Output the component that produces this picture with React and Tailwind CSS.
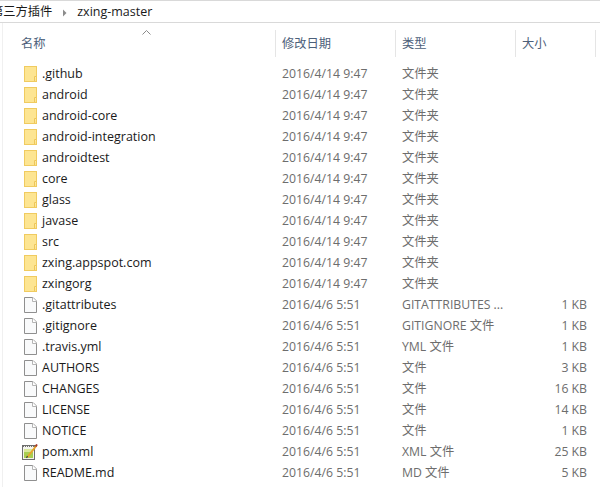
const rows = [
  ['.github', '2016/4/14 9:47', '文件夹', '', 'folder'],
  ['android', '2016/4/14 9:47', '文件夹', '', 'folder'],
  ['android-core', '2016/4/14 9:47', '文件夹', '', 'folder'],
  ['android-integration', '2016/4/14 9:47', '文件夹', '', 'folder'],
  ['androidtest', '2016/4/14 9:47', '文件夹', '', 'folder'],
  ['core', '2016/4/14 9:47', '文件夹', '', 'folder'],
  ['glass', '2016/4/14 9:47', '文件夹', '', 'folder'],
  ['javase', '2016/4/14 9:47', '文件夹', '', 'folder'],
  ['src', '2016/4/14 9:47', '文件夹', '', 'folder'],
  ['zxing.appspot.com', '2016/4/14 9:47', '文件夹', '', 'folder'],
  ['zxingorg', '2016/4/14 9:47', '文件夹', '', 'folder'],
  ['.gitattributes', '2016/4/6 5:51', 'GITATTRIBUTES ...', '1 KB', 'file'],
  ['.gitignore', '2016/4/6 5:51', 'GITIGNORE 文件', '1 KB', 'file'],
  ['.travis.yml', '2016/4/6 5:51', 'YML 文件', '1 KB', 'file'],
  ['AUTHORS', '2016/4/6 5:51', '文件', '3 KB', 'file'],
  ['CHANGES', '2016/4/6 5:51', '文件', '16 KB', 'file'],
  ['LICENSE', '2016/4/6 5:51', '文件', '14 KB', 'file'],
  ['NOTICE', '2016/4/6 5:51', '文件', '1 KB', 'file'],
  ['pom.xml', '2016/4/6 5:51', 'XML 文件', '25 KB', 'xml'],
  ['README.md', '2016/4/6 5:51', 'MD 文件', '5 KB', 'file'],
];

function FolderIcon() {
  return (
    <svg width="13" height="16" viewBox="0 0 13 16" className="shrink-0">
      <rect x="0.5" y="0.5" width="12" height="15" fill="#fde592" stroke="#f0cb60" />
      <path d="M10.5 15 V10.5 H12" fill="#fdeeb4" stroke="#eec65a" />
    </svg>
  );
}

function FileIcon() {
  return (
    <svg width="13" height="16" viewBox="0 0 13 16" className="shrink-0">
      <path d="M0.5 0.5 H9 L12.5 4 V15.5 H0.5 Z" fill="#f9fafb" stroke="#8f8f8f" />
      <path d="M8.5 0.5 V4.5 H12.5" fill="#ffffff" stroke="#b5b5b5" />
    </svg>
  );
}

function XmlIcon() {
  return (
    <svg width="16" height="16" viewBox="0 0 16 16" className="shrink-0 -ml-0.5 -mr-px">
      <rect x="0.5" y="1.5" width="12" height="14" fill="#f4f4ee" stroke="#6e6e6e" />
      <path d="M1 2.5 H12" stroke="#6e6e6e" strokeDasharray="1 1" />
      <rect x="2" y="5" width="9" height="9" fill="#a8cf52" />
      <rect x="2" y="5" width="9" height="3" fill="#d9e89a" />
      <path d="M5.5 13 L14.5 1.5" stroke="#e8a52c" strokeWidth="2" />
      <path d="M13.5 2.5 L15 0.5" stroke="#a33a2a" strokeWidth="2" />
      <path d="M4.5 14 L5.5 12" stroke="#444444" strokeWidth="1.2" />
    </svg>
  );
}

function Row({ name, date, type, size, kind }) {
  return (
    <div className="flex h-[21px] items-center">
      <div className="flex w-[275px] items-center gap-[3px] pl-[24px]">
        {kind === 'folder' && <FolderIcon />}
        {kind === 'file' && <FileIcon />}
        {kind === 'xml' && <XmlIcon />}
        <span className="pl-[2px] pt-[2px] text-[12.5px] text-[#1a1a1a]">{name}</span>
      </div>
      <div className="w-[120px] pl-[7px] pt-[2px] text-[#6d6d6d]">{date}</div>
      <div className="w-[120px] pl-[7px] pt-[2px] text-[#6d6d6d]">{type}</div>
      <div className="w-[72px] pt-[2px] text-right text-[#6d6d6d]">{size}</div>
    </div>
  );
}

function HeaderCell({ width, children }) {
  return (
    <div className="flex h-[27px] items-center border-r border-[#e5e5e5] pl-[6px] pt-[2px] text-[#4c607a]" style={{ width }}>
      {children}
    </div>
  );
}

export default function App() {
  return (
    <div className="h-[487px] w-[600px] overflow-hidden bg-white font-['Open_Sans','Noto_Sans_CJK_SC',sans-serif] text-[12.25px] leading-none">
      {/* Breadcrumb bar */}
      <div className="flex h-[23px] items-center overflow-hidden border-t border-b border-[#d9d9d9] pt-[2px] text-[12.25px] text-[#1a1a1a]">
        <span className="-ml-[9px] whitespace-nowrap">第三方插件</span>
        <svg width="6" height="8" viewBox="0 0 6 8" className="ml-[10px] mr-[9px]">
          <path d="M1 0.5 L4.5 4 L1 7.5 Z" fill="#8c8c8c" />
        </svg>
        <span className="text-[12.5px]">zxing-master</span>
      </div>

      <div className="ml-[2px] h-[464px] border-l border-[#f0f0f0]">
        {/* Column headers */}
        <div className="relative flex h-[34px] items-start pt-[7px]">
          <svg width="9" height="5" viewBox="0 0 9 5" className="absolute left-[139px] top-[7px]">
            <path d="M0.5 4.5 L4.5 0.5 L8.5 4.5" fill="none" stroke="#8a8a8a" />
          </svg>
          <div className="flex h-[27px] w-[273px] items-center border-r border-[#e5e5e5] pl-[18px] pt-[2px] text-[#4c607a]">名称</div>
          <HeaderCell width={120}>修改日期</HeaderCell>
          <HeaderCell width={120}>类型</HeaderCell>
          <HeaderCell width={80}>大小</HeaderCell>
        </div>

        {/* File list */}
        <div className="pt-[6px] -ml-[3px]">
          {rows.map((r) => (
            <Row key={r[0]} name={r[0]} date={r[1]} type={r[2]} size={r[3]} kind={r[4]} />
          ))}
        </div>
      </div>
    </div>
  );
}
